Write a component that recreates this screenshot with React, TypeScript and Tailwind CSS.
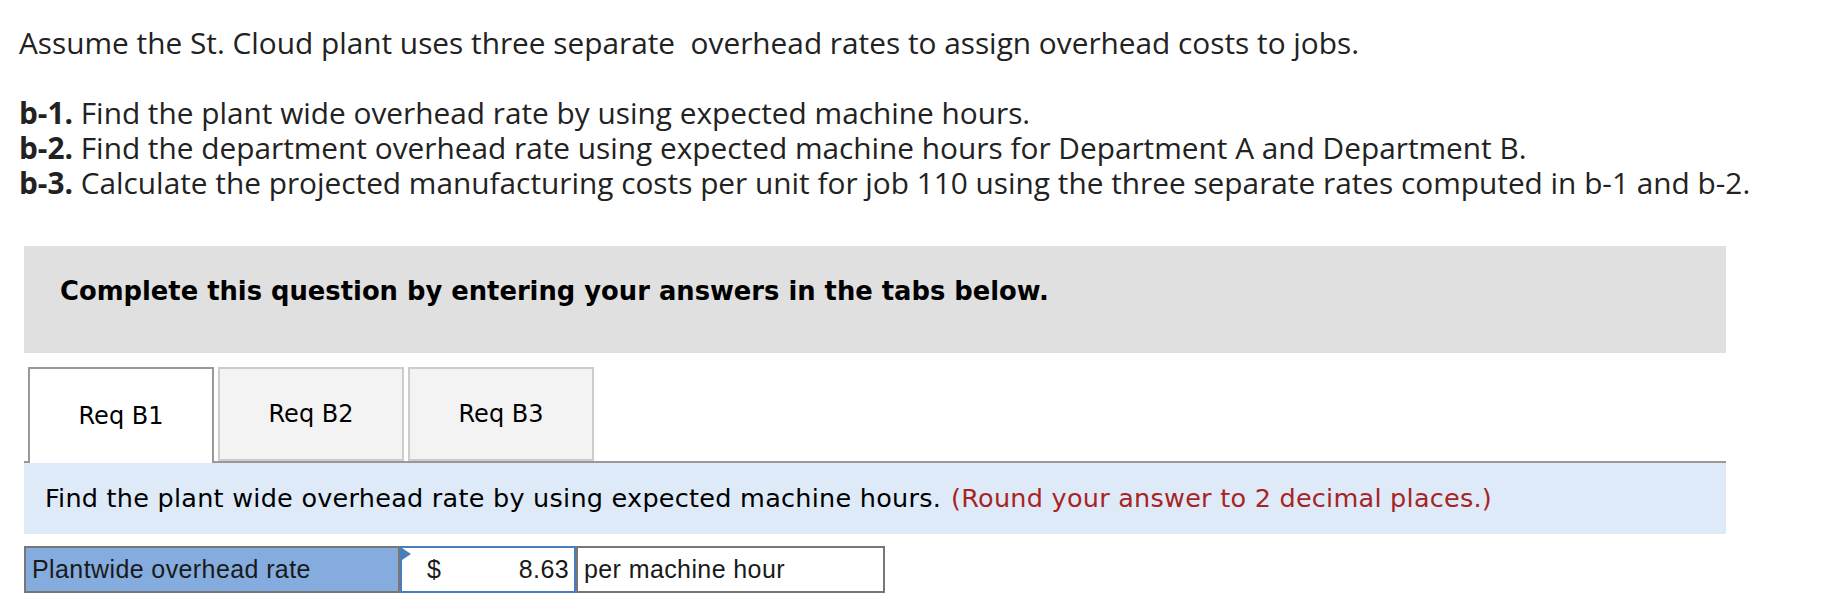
import React from "react";

export default function App() {
  const tabs = ["Req B1", "Req B2", "Req B3"];
  return (
    <div className="w-[1844px] h-[604px] bg-white overflow-hidden pl-[19px] pt-[25px]">
      <div className="text-[29.8px] leading-[35px] text-[#222] [font-family:'Open_Sans',Lato,sans-serif]">
        <p>Assume the St. Cloud plant uses three separate{"\u00a0"} overhead rates to assign overhead costs to jobs.</p>
        <p className="h-[35px]"></p>
        <p>
          <b className="font-bold">b-1.</b> Find the plant wide overhead rate by using expected machine hours.
        </p>
        <p>
          <b className="font-bold">b-2.</b> Find the department overhead rate using expected machine hours for Department A and Department B.
        </p>
        <p>
          <b className="font-bold">b-3.</b> Calculate the projected manufacturing costs per unit for job 110 using the three separate rates computed in b-1 and b-2.
        </p>
      </div>

      <div className="ml-[5px] w-[1702px] mt-[46px] [font-family:'DejaVu_Sans',Verdana,sans-serif]">
        <div className="h-[107px] bg-[#e0e0e0] pl-[36px] pt-[30px] text-[25.8px] leading-[30px] font-bold text-black">
          Complete this question by entering your answers in the tabs below.
        </div>

        <div className="mt-[14px] flex items-start gap-[4px] pl-[4px] border-b-2 border-[#999]">
          {tabs.map((t, i) =>
            i === 0 ? (
              <div
                key={t}
                className="w-[186px] h-[96px] -mb-[2px] border-2 border-b-0 border-[#999] bg-white flex items-center justify-center text-[24px] text-black"
              >
                {t}
              </div>
            ) : (
              <div
                key={t}
                className="w-[186px] h-[94px] border-2 border-[#ccc] bg-[#f3f3f3] flex items-center justify-center text-[24px] text-black"
              >
                {t}
              </div>
            )
          )}
        </div>

        <div className="h-[71px] bg-[#deeaf8] flex items-center pl-[21px] text-[25.5px] tracking-[0.25px] text-black">
          <span>Find the plant wide overhead rate by using expected machine hours.</span>
          <span className="ml-[10px] text-[#a82424]">(Round your answer to 2 decimal places.)</span>
        </div>

        <div className="mt-[12px] flex h-[47px] text-[25px] tracking-[0.4px] text-[#1a1a1a] [font-family:'Liberation_Sans',Arial,sans-serif]">
          <div className="w-[376px] h-full border-2 border-[#777] bg-[#84acdf] pl-[6px] flex items-center">
            Plantwide overhead rate
          </div>
          <div className="relative w-[176px] h-full border-2 border-[#4a7ebb] bg-white flex items-center justify-between pl-[25px] pr-[5px]">
            <span className="absolute left-0 top-0 w-0 h-0 border-t-[6px] border-b-[6px] border-l-[9px] border-t-transparent border-b-transparent border-l-[#4a7ebb]"></span>
            <span>$</span>
            <span>8.63</span>
          </div>
          <div className="w-[309px] h-full border-2 border-[#777] bg-white pl-[6px] flex items-center">
            per machine hour
          </div>
        </div>
      </div>
    </div>
  );
}
